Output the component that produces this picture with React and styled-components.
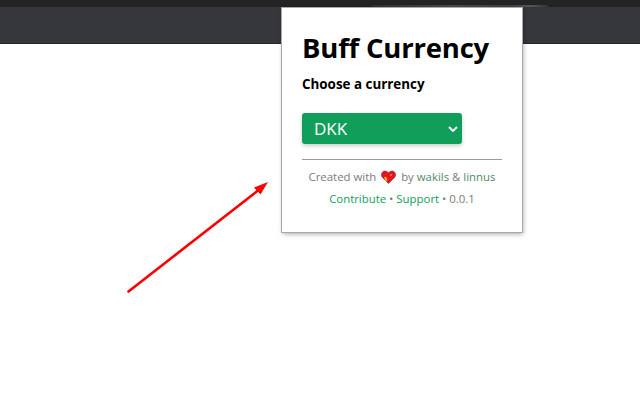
import React from "react";
import styled, { createGlobalStyle } from "styled-components";

const GlobalStyle = createGlobalStyle`
  html, body {
    margin: 0;
    padding: 0;
    background: #fff;
  }
`;

const Page = styled.div`
  position: relative;
  width: 640px;
  height: 400px;
  overflow: hidden;
  background: #fff;
  font-family: "Open Sans", "Noto Sans", sans-serif;
`;

const TabStrip = styled.div`
  display: flex;
  justify-content: flex-start;
  align-items: flex-end;
  height: 7px;
  padding-left: 372px;
  background: #232323;
`;

const TabEdge = styled.div`
  width: 176px;
  height: 2px;
  background: linear-gradient(90deg, #303134, #46474b 45%, #3d3e42 80%, #58595c 90%, #303134);
`;

const Toolbar = styled.div`
  height: 36px;
  background: #36373b;
  border-bottom: 1px solid #27282a;
`;

const Popup = styled.div`
  position: absolute;
  left: 282px;
  top: 8px;
  width: 240px;
  height: 224px;
  box-sizing: border-box;
  padding: 23px 20px 0 20px;
  background: #fff;
  box-shadow: 0 0 0 1px #a8a8a8, 1px 2px 5px rgba(0, 0, 0, 0.35);
`;

const Title = styled.h1`
  margin: 0;
  font-size: 27.5px;
  line-height: 34px;
  font-weight: 700;
  color: #000;
  white-space: nowrap;
  letter-spacing: -0.2px;
`;

const Subtitle = styled.h2`
  margin: 10px 0 0;
  font-size: 13.4px;
  line-height: 18px;
  font-weight: 700;
  color: #000;
`;

const SelectBox = styled.div`
  display: flex;
  align-items: center;
  justify-content: space-between;
  width: 160px;
  height: 31px;
  margin-top: 20px;
  padding: 0 4px 0 12px;
  box-sizing: border-box;
  background: #119e5a;
  border-radius: 3px;
  box-shadow: 0 2px 4px rgba(0, 0, 0, 0.2);
  color: #fff;
  font-size: 17px;
`;

const Divider = styled.hr`
  margin: 15px 0 0;
  border: 0;
  border-top: 1px solid #9a9a9a;
`;

const Footer = styled.div`
  margin-top: 6px;
  font-size: 11.4px;
  line-height: 22px;
  text-align: center;
  color: #7b7b7b;
  white-space: nowrap;
`;

const FooterLink = styled.span`
  color: ${(p) => (p.$muted ? "#4f8a6a" : "#119e5a")};
`;

const Heart = styled.svg`
  width: 15px;
  height: 14px;
  margin: 0 2px 0 2px;
  vertical-align: -3px;
`;

const Arrow = styled.svg`
  position: absolute;
  left: 120px;
  top: 175px;
  width: 160px;
  height: 125px;
`;

export default function App() {
  return (
    <Page>
      <GlobalStyle />
      <TabStrip>
        <TabEdge />
      </TabStrip>
      <Toolbar />
      <Arrow viewBox="0 0 160 125">
        <line x1="8.5" y1="116.5" x2="138" y2="15.5" stroke="#ff0000" strokeWidth="2.6" strokeLinecap="round" />
        <polygon points="148,7 134,12.500 140.500,19.500" fill="#ff0000" />
      </Arrow>
      <Popup>
        <Title>Buff Currency</Title>
        <Subtitle>Choose a currency</Subtitle>
        <SelectBox>
          DKK
          <svg width="10" height="8" viewBox="0 0 10 8">
            <path d="M1 2l4 4 4-4" fill="none" stroke="#fff" strokeWidth="1.8" />
          </svg>
        </SelectBox>
        <Divider />
        <Footer>
          <div>
            Created with{" "}
            <Heart viewBox="0 0 15 14">
              <path d="M7.500 13.500L1 7C-.5 4.500 1 1 4 1c1.500 0 2.700.8 3.500 2C8.300 1.800 9.500 1 11 1c3 0 4.500 3.500 3 6z" fill="#e6141e" stroke="#7a1c1c" strokeWidth="0.5" />
              <path d="M3 7.500l2-1 1.500 3.500-1.500 1.500z" fill="#f4b41a" />
              <path d="M9 4h2v2H9z" fill="#f0604a" />
            </Heart>{" "}
            by <FooterLink $muted>wakils</FooterLink> &amp; <FooterLink $muted>linnus</FooterLink>
          </div>
          <div>
            <FooterLink>Contribute</FooterLink> • <FooterLink>Support</FooterLink> • 0.0.1
          </div>
        </Footer>
      </Popup>
    </Page>
  );
}
